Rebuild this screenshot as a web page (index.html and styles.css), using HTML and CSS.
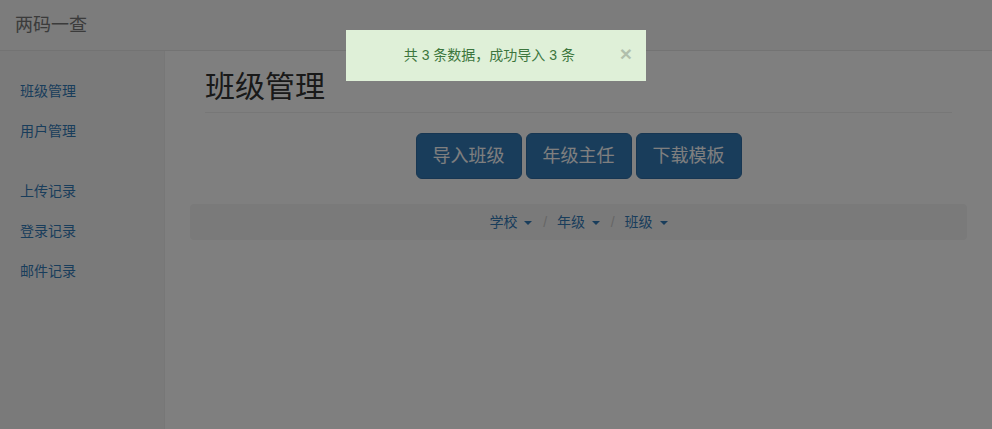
FILE: index.html
```html
<!DOCTYPE html>
<html lang="zh-CN">
<head>
    <meta charset="UTF-8">
    <meta name="viewport" content="width=device-width, initial-scale=1.0">
    <title>两码一查 - 班级管理</title>
    <link rel="stylesheet" href="styles.css">
</head>
<body>
    <div class="page">
        <!-- Top navbar -->
        <header class="navbar">
            <a class="brand" href="#">两码一查</a>
        </header>

        <div class="layout">
            <!-- Sidebar -->
            <aside class="sidebar">
                <ul class="nav-sidebar">
                    <li><a href="#">班级管理</a></li>
                    <li><a href="#">用户管理</a></li>
                </ul>
                <ul class="nav-sidebar">
                    <li><a href="#">上传记录</a></li>
                    <li><a href="#">登录记录</a></li>
                    <li><a href="#">邮件记录</a></li>
                </ul>
            </aside>

            <!-- Main content -->
            <main class="main">
                <div class="page-header">
                    <h1>班级管理</h1>
                </div>

                <div class="actions">
                    <button class="btn-lg">导入班级</button>
                    <button class="btn-lg">年级主任</button>
                    <button class="btn-lg">下载模板</button>
                </div>

                <ol class="breadcrumb">
                    <li><a href="#">学校 <span class="caret"></span></a></li>
                    <li><a href="#">年级 <span class="caret"></span></a></li>
                    <li><a href="#">班级 <span class="caret"></span></a></li>
                </ol>
            </main>
        </div>
    </div>

    <!-- Modal backdrop + import result -->
    <div class="backdrop"></div>
    <div class="alert-success">
        <button class="close" type="button">&times;</button>
        共 3 条数据，成功导入 3 条
    </div>
</body>
</html>
```

FILE: styles.css
```css
/* General */
html, body {
    height: 100%;
}

body {
    margin: 0;
    font-family: "Liberation Sans", "Noto Sans CJK SC", sans-serif;
    font-size: 14px;
    line-height: 20px;
    color: #333;
    background-color: #fff;
}

a {
    color: #337ab7;
    text-decoration: none;
}

.page {
    display: flex;
    flex-direction: column;
    height: 100%;
}

/* Navbar */
.navbar {
    height: 50px;
    flex-shrink: 0;
    background-color: #f8f8f8;
    border-bottom: 1px solid #e7e7e7;
}

.brand {
    display: block;
    padding: 15px;
    font-size: 18px;
    line-height: 20px;
    color: #777;
}

.layout {
    display: flex;
    flex: 1;
}

/* Sidebar */
.sidebar {
    width: 164px;
    padding: 20px 0;
    background-color: #f5f5f5;
    border-right: 1px solid #eee;
}

.nav-sidebar {
    list-style: none;
    margin: 0 0 20px;
    padding: 0;
}

.nav-sidebar li a {
    display: block;
    padding: 10px 20px;
}

/* Main */
.main {
    flex: 1;
    padding: 19px 40px 20px;
}

.page-header {
    padding-bottom: 9px;
    margin-bottom: 20px;
    border-bottom: 1px solid #eee;
}

.page-header h1 {
    margin: 0;
    font-size: 30px;
    font-weight: 400;
    line-height: 33px;
}

.actions {
    display: flex;
    justify-content: center;
    gap: 4px;
    margin-bottom: 25px;
}

.btn-lg {
    padding: 10px 16px;
    font-family: inherit;
    font-size: 18px;
    line-height: 24px;
    color: #fff;
    background-color: #337ab7;
    border: 1px solid #2e6da4;
    border-radius: 6px;
    cursor: pointer;
}

/* Breadcrumb filter */
.breadcrumb {
    list-style: none;
    margin: 0 -15px 20px;
    padding: 8px 15px;
    text-align: center;
    background-color: #f5f5f5;
    border-radius: 4px;
}

.breadcrumb li {
    display: inline-block;
}

.breadcrumb li + li:before {
    content: "/\00a0";
    padding: 0 6px 0 7px;
    color: #ccc;
}

.caret {
    display: inline-block;
    width: 0;
    height: 0;
    margin-left: 3px;
    vertical-align: middle;
    border-top: 4px solid;
    border-right: 4px solid transparent;
    border-left: 4px solid transparent;
}

/* Overlay */
.backdrop {
    position: fixed;
    top: 0;
    right: 0;
    bottom: 0;
    left: 0;
    background-color: #000;
    opacity: 0.5;
}

.alert-success {
    position: fixed;
    top: 30px;
    left: 50%;
    width: 300px;
    box-sizing: border-box;
    transform: translateX(-50%);
    padding: 15px 16px 15px 15px;
    text-align: center;
    color: #3c763d;
    background-color: #dff0d8;
}

.close {
    float: right;
    position: relative;
    top: -2px;
    right: -2px;
    padding: 0;
    font-family: inherit;
    font-size: 21px;
    font-weight: bold;
    line-height: 1;
    color: #000;
    opacity: 0.2;
    background: none;
    border: 0;
    cursor: pointer;
}
```
